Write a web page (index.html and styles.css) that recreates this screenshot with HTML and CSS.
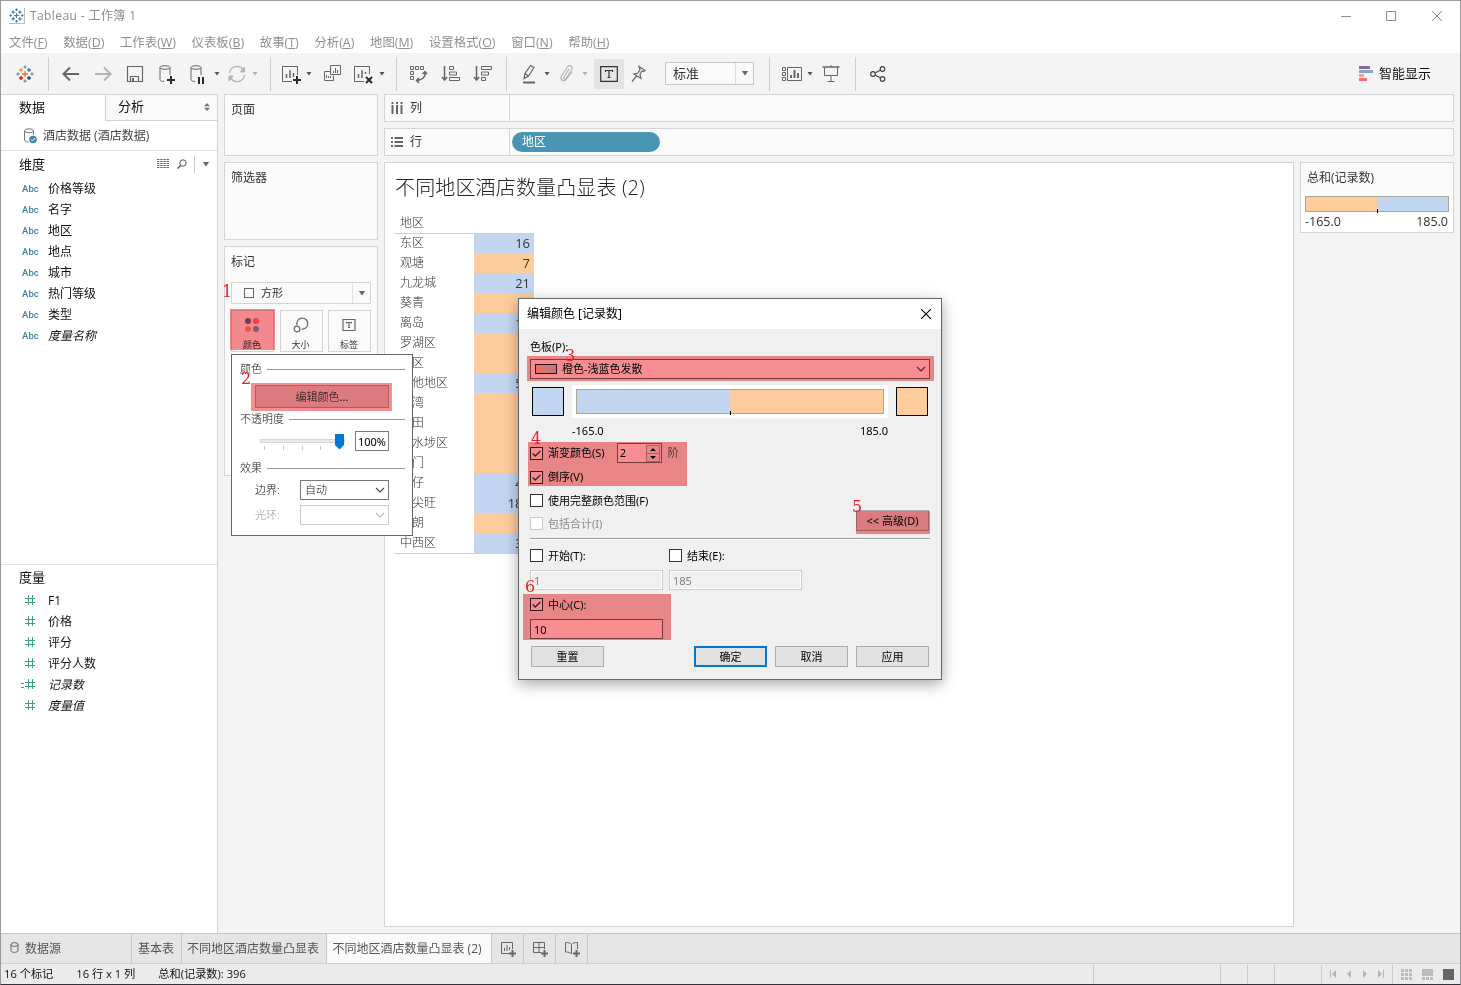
FILE: index.html
```
<!DOCTYPE html>
<html lang="zh-CN">
<head>
    <meta charset="UTF-8">
    <title>Tableau - 工作簿 1</title>
    <link rel="stylesheet" href="styles.css">
</head>
<body>
    <svg width="0" height="0" class="defs">
        <symbol id="logo" viewBox="0 0 18 18">
            <g fill="none" stroke-width="1.3">
                <path class="c1" d="M9 6v6M6 9h6"/>
                <path class="c2" d="M5 3v4M3 5h4"/>
                <path class="c3" d="M13 3v4M11 5h4"/>
                <path class="c4" d="M5 11v4M3 13h4"/>
                <path class="c5" d="M13 11v4M11 13h4"/>
                <path class="c6" d="M9 .5v3M7.500 2h3M9 14.500v3M7.500 16h3M2 7.500v3M.5 9h3M16 7.500v3M14.500 9h3"/>
            </g>
        </symbol>
        <symbol id="caret" viewBox="0 0 6 4"><path d="M.5 0h5L3 3.500z" fill="currentColor"/></symbol>
        <symbol id="chev" viewBox="0 0 10 6"><path d="M1 1l4 4 4-4" fill="none" stroke="currentColor" stroke-width="1.100"/></symbol>
        <symbol id="tick" viewBox="0 0 13 13"><path d="M2 6.500l3 3L11 3.500" fill="none" stroke="currentColor" stroke-width="1.400"/></symbol>
        <symbol id="hash" viewBox="0 0 10 10"><path d="M3.500 0v10M7.500 0v10M0 3.500h10M0 7.500h10" fill="none" stroke="currentColor"/></symbol>
    </svg>

    <div class="window">
        <div class="titlebar">
            <svg class="app-icon" viewBox="0 0 18 18"><path d="M9 6v6M6 9h6M5 3v4M3 5h4M13 3v4M11 5h4M5 11v4M3 13h4M13 11v4M11 13h4M9 .5v3M7.500 2h3M9 14.500v3M7.500 16h3M2 7.500v3M.5 9h3M16 7.500v3M14.500 9h3" fill="none" stroke="#3d7ca8" stroke-width="1.400"/></svg>
            <span class="title">Tableau - 工作簿 1</span>
            <svg class="win-btns" viewBox="0 0 102 12" fill="none" stroke="#8d8d8d">
                <path d="M0 6.500h10M45.500 1.500h9v9h-9zM91 1l10 10M101 1L91 11"/>
            </svg>
        </div>
        <div class="menubar">
            <span>文件(<u>F</u>)</span><span>数据(<u>D</u>)</span><span>工作表(<u>W</u>)</span><span>仪表板(<u>B</u>)</span><span>故事(<u>T</u>)</span><span>分析(<u>A</u>)</span><span>地图(<u>M</u>)</span><span>设置格式(<u>O</u>)</span><span>窗口(<u>N</u>)</span><span>帮助(<u>H</u>)</span>
        </div>

        <div class="toolbar">
            <div class="group g1"><svg class="logo"><use href="#logo"/></svg></div>
            <div class="group g2">
                <svg class="icon" viewBox="0 0 20 20"><path stroke-width="2" d="M18 10H3M9 3.500L2.500 10 9 16.500"/></svg>
                <svg class="icon off" viewBox="0 0 20 20"><path stroke-width="2" d="M2 10h15M11 3.500l6.500 6.500-6.500 6.500"/></svg>
                <svg class="icon" viewBox="0 0 20 20"><path stroke-width="1.200" d="M2.500 2.500h15v15h-15zM5.500 17v-4.500h8v4.500"/><path stroke-width="2" d="M8 14v3"/></svg>
                <svg class="icon" viewBox="0 0 20 20"><ellipse cx="8" cy="3.500" rx="5" ry="1.800"/><path d="M3 3.500v12c0 1.300 2 2 4 2M13 3.500V11"/><path class="dark" d="M14 12v8M10 16h8"/></svg>
                <svg class="icon" viewBox="0 0 20 20"><ellipse cx="7" cy="3.500" rx="5" ry="1.800"/><path d="M2 3.500v12c0 1.300 2 2 4 2M12 3.500V11"/><path class="dark" d="M10 13v7M14 13v7"/></svg>
                <svg class="caret"><use href="#caret"/></svg>
                <svg class="icon off" viewBox="0 0 20 20"><path stroke-width="1.300" d="M2.500 9A7.500 7.500 0 0 1 16 5.500M17.500 11a7.500 7.500 0 0 1-13.500 3.500"/><path fill="#b4b4b4" d="M17.500 3v5h-4zM2 17v-5h4z"/></svg>
                <svg class="caret off"><use href="#caret"/></svg>
            </div>
            <div class="group g3">
                <svg class="icon" viewBox="0 0 20 20"><path d="M16.500 11V2.500h-15v15H11"/><path stroke-width="1.500" d="M5.500 14v-4M9 14V6M12.500 13V9"/><path class="dark" d="M16 12v8M12 16h8"/></svg>
                <svg class="caret"><use href="#caret"/></svg>
                <svg class="icon dup" viewBox="0 0 20 20"><path d="M8.500 1.500h10v9h-10zM8 7.500H2.500v9h9v-5"/><path d="M11.500 9V7M13.500 9V4M15.500 9V6M4.500 14v-3M6.500 14v-2M8.500 14v-2"/></svg>
                <svg class="icon clear" viewBox="0 0 20 20"><path d="M16.500 10V2.500h-15v15H11"/><path stroke-width="1.500" d="M5.500 14v-4M9 14V6M12.500 10V8"/><path class="dark" d="M13 13l6 6M19 13l-6 6"/></svg>
                <svg class="caret"><use href="#caret"/></svg>
            </div>
            <div class="group g4">
                <svg class="icon" viewBox="0 0 20 20"><path d="M1.500 2.500h3v3h-3zM6.500 2.500h3v3h-3zM11.500 2.500h3v3h-3zM1.500 7.500h3v3h-3zM1.500 12.500h3v3h-3z"/><path stroke-width="1.500" d="M16 8c1 5-3 8-8 8.500M13.500 10l2.500-2.500 2 2.500M10 14l-2.500 2.500L10 19"/></svg>
                <svg class="icon" viewBox="0 0 20 20"><path stroke-width="1.500" d="M3.500 2v13M1 13l2.500 3L6 13"/><path d="M8.500 2.500h4v3h-4zM8.500 8h7v3h-7zM8.500 13.500h10v3h-10z"/></svg>
                <svg class="icon" viewBox="0 0 20 20"><path stroke-width="1.500" d="M3.500 2v13M1 13l2.500 3L6 13"/><path d="M8.500 2.500h10v3h-10zM8.500 8h7v3h-7zM8.500 13.500h4v3h-4z"/></svg>
            </div>
            <div class="group g5">
                <svg class="icon" viewBox="0 0 20 20"><path stroke-width="1.200" d="M5 14.500l1-5 5.500-8 3.500 2-5.500 8.500zM6 9.500l3.500 2.500"/><path stroke-width="2" d="M4 18.500h12"/></svg>
                <svg class="caret"><use href="#caret"/></svg>
                <svg class="icon off" viewBox="0 0 20 20"><path stroke-width="1.200" d="M12 5l-5 8c-1 2 1 3 2 1.500l5.500-8.500c2-3.500-2-6-4-3L5 11c-3 5 2 7.500 4.500 4L15 8"/></svg>
                <svg class="caret off"><use href="#caret"/></svg>
                <span class="label-btn"><svg viewBox="0 0 18 16"><path d="M.7.7h16.600v14.600H.7zM5.500 6V4.500h7V6M9 4.500v7M7.500 11.500h3"/></svg></span>
                <svg class="icon pin" viewBox="0 0 20 20"><path stroke-width="1.200" d="M11 2.500l6 4-1.500 1-1.500-.5-2 3.500 1 4-7-4.500 4-1 2-3.500zM8.500 12L4 17.500"/></svg>
                <div class="combo"><span>标准</span><i><svg class="caret big"><use href="#caret"/></svg></i></div>
            </div>
            <div class="group g6">
                <svg class="icon" viewBox="0 0 20 20"><path d="M.5 3.500h3v3h-3zM.5 8.500h3v3h-3zM.5 13.500h3v3h-3zM5.500 3.500h14v13h-14z"/><path stroke-width="2" d="M9 14v-3M12.500 14V6M16 14V9"/></svg>
                <svg class="caret"><use href="#caret"/></svg>
                <svg class="icon screen" viewBox="0 0 20 20"><path stroke-width="1.500" d="M1.500 3h17"/><path d="M3.500 3v8.500h13V3M10 1v2M10 11.500v6M6.500 17.500h7"/></svg>
            </div>
            <div class="group g7">
                <svg class="icon share" viewBox="0 0 20 20"><circle cx="5" cy="10" r="2.300"/><circle cx="14.500" cy="5" r="2.300"/><circle cx="14.500" cy="15" r="2.300"/><path d="M7.300 8.800l5-2.600M7.300 11.200l5 2.600"/></svg>
            </div>
            <div class="showme">
                <svg viewBox="0 0 14 15"><path fill="#866b94" d="M0 0h11v3H0z"/><path fill="#82a6cc" d="M0 4h14v3H0z"/><path fill="#f0a581" d="M0 8h5v3H0z"/><path fill="#f96a7c" d="M0 12h8v3H0z"/></svg>
                智能显示
            </div>
        </div>

        <div class="main">
            <div class="sidebar">
                <div class="side-tabs">
                    <span class="active">数据</span>
                    <span class="inactive">分析<svg viewBox="0 0 6 8"><path d="M3 0l3 3.300H0zM3 8l3-3.300H0z" fill="#6d7780"/></svg></span>
                </div>
                <div class="source">
                    <svg viewBox="0 0 14 16"><g fill="none" stroke="#777"><ellipse cx="6" cy="2.800" rx="4.500" ry="2"/><path d="M1.500 3v9c0 1 1.500 2 4 2M10.500 3v4"/></g><circle cx="10" cy="11.500" r="3.800" fill="#3f86a5"/><path d="M8 11.500l1.500 1.500 2.500-3" fill="none" stroke="#fff"/></svg>
                    酒店数据 (酒店数据)
                </div>
                <div class="dims">
                    <div class="side-head">
                        <span>维度</span>
                        <svg class="grid-icon" viewBox="0 0 12 10"><path d="M0 .5h12M0 2.500h12M0 4.500h12M0 6.500h12M0 8.500h12" stroke="#666" stroke-dasharray="2.400 .8"/></svg>
                        <svg class="find" viewBox="0 0 10 10"><circle cx="6" cy="4" r="3.200" fill="none" stroke="#555"/><path d="M3.500 6.500L.5 9.500" stroke="#555" stroke-width="1.500"/></svg>
                        <i><svg class="caret big"><use href="#caret"/></svg></i>
                    </div>
                    <ul class="fields abc">
                        <li><b>Abc</b>价格等级</li>
                        <li><b>Abc</b>名字</li>
                        <li><b>Abc</b>地区</li>
                        <li><b>Abc</b>地点</li>
                        <li><b>Abc</b>城市</li>
                        <li><b>Abc</b>热门等级</li>
                        <li><b>Abc</b>类型</li>
                        <li><b>Abc</b><em>度量名称</em></li>
                    </ul>
                </div>
                <div class="measures">
                    <div class="side-head"><span>度量</span></div>
                    <ul class="fields">
                        <li><b><svg><use href="#hash"/></svg></b>F1</li>
                        <li><b><svg><use href="#hash"/></svg></b>价格</li>
                        <li><b><svg><use href="#hash"/></svg></b>评分</li>
                        <li><b><svg><use href="#hash"/></svg></b>评分人数</li>
                        <li><b class="calc"><svg><use href="#hash"/></svg></b><em>记录数</em></li>
                        <li><b><svg><use href="#hash"/></svg></b><em>度量值</em></li>
                    </ul>
                </div>
            </div>

            <div class="cards">
                <div class="card pages">页面</div>
                <div class="card filters">筛选器</div>
                <div class="card marks">
                    标记
                    <div class="mark-type"><em></em><span>方形</span><i><svg class="caret big"><use href="#caret"/></svg></i></div>
                    <div class="mark-btns">
                        <div><svg viewBox="0 0 16 16"><circle cx="4" cy="4" r="3" fill="#7b6c95"/><circle cx="12" cy="4" r="3" fill="#f96a7c"/><circle cx="4" cy="12" r="3" fill="#f0a581"/><circle cx="12" cy="12" r="3" fill="#82a6cc"/></svg>颜色</div>
                        <div><svg viewBox="0 0 16 16" fill="none" stroke="#666" stroke-width="1.200"><path d="M4 8a5.500 5.500 0 1 1 4.500 4"/><circle cx="4" cy="12" r="2.800"/></svg>大小</div>
                        <div><svg viewBox="0 0 16 16" fill="none" stroke="#666" stroke-width="1.200"><path d="M2 2.500h12v11H2zM5.500 6.500V5.500h5v1M8 5.500v5M7 10.500h2"/></svg>标签</div>
                    </div>
                </div>
            </div>

            <div class="workspace">
                <div class="shelf">
                    <div class="shelf-name"><svg viewBox="0 0 12 12"><path d="M1.500 0v2M6 0v2M10.500 0v2M1.500 3v9M6 3v9M10.500 3v9" stroke="#666" stroke-width="2"/></svg>列</div>
                </div>
                <div class="shelf">
                    <div class="shelf-name"><svg viewBox="0 0 12 12"><path d="M0 2h2M0 6h2M0 10h2M3.500 2H12M3.500 6H12M3.500 10H12" stroke="#666" stroke-width="1.800"/></svg>行</div>
                    <div class="pill">地区</div>
                </div>
                <div class="lower">
                    <div class="view">
                        <h1>不同地区酒店数量凸显表 (2)</h1>
                        <table>
                            <tr><th>地区</th><th></th></tr>
                            <tr><td>东区</td><td class="blue">16</td></tr>
                            <tr><td>观塘</td><td class="orange">7</td></tr>
                            <tr><td>九龙城</td><td class="blue">21</td></tr>
                            <tr><td>葵青</td><td class="orange">3</td></tr>
                            <tr><td>离岛</td><td class="blue">11</td></tr>
                            <tr><td>罗湖区</td><td class="orange">1</td></tr>
                            <tr><td>南区</td><td class="orange">4</td></tr>
                            <tr><td>其他地区</td><td class="blue">55</td></tr>
                            <tr><td>荃湾</td><td class="orange">4</td></tr>
                            <tr><td>沙田</td><td class="orange">5</td></tr>
                            <tr><td>深水埗区</td><td class="orange">3</td></tr>
                            <tr><td>屯门</td><td class="orange">2</td></tr>
                            <tr><td>湾仔</td><td class="blue">41</td></tr>
                            <tr><td>油尖旺</td><td class="blue">185</td></tr>
                            <tr><td>元朗</td><td class="orange">3</td></tr>
                            <tr><td>中西区</td><td class="blue">35</td></tr>
                        </table>
                    </div>
                    <div class="legend">
                        <div class="legend-title">总和(记录数)</div>
                        <div class="legend-bar"></div>
                        <div class="legend-range"><span>-165.0</span><span>185.0</span></div>
                    </div>
                </div>
            </div>
        </div>

        <div class="sheet-tabs">
            <span class="ds"><svg viewBox="0 0 8 11" fill="none" stroke="#666"><ellipse cx="4" cy="2.500" rx="3.500" ry="1.900"/><path d="M.5 2.500v6c0 2.500 7 2.500 7 0v-6"/></svg>数据源</span>
            <span class="t1">基本表</span>
            <span class="t2">不同地区酒店数量凸显表</span>
            <span class="t3 active">不同地区酒店数量凸显表 (2)</span>
            <span class="add"><svg viewBox="0 0 16 16"><path d="M12.500 8V1.500h-11v11H9M4.500 10V7M7 10V4M9.500 9V6"/><path stroke-width="2" d="M12.500 9v7M9 12.500h7"/></svg></span>
            <span class="add"><svg viewBox="0 0 16 16"><path d="M12.500 8V1.500h-11v10H9M7 1.500v10M1.500 6.500h11"/><path stroke-width="2" d="M12.500 9v7M9 12.500h7"/></svg></span>
            <span class="add"><svg viewBox="0 0 16 16"><path d="M13.500 8V1.500c-3 0-5 .5-6 2-1-1.500-3-2-6-2v9.500c3 0 5 .5 6 2V3.500"/><path stroke-width="2" d="M12.500 9v7M9 12.500h7"/></svg></span>
        </div>
        <div class="status">
            <span>16 个标记</span><span>16 行 x 1 列</span><span>总和(记录数): 396</span>
            <div class="boxes">
                <i class="b1"></i><i class="b2"></i><i class="b2"></i><i class="b3"></i>
                <i class="nav"><svg viewBox="0 0 56 8" fill="#b4b4b4"><path d="M0 0h1v8H0zM6 0v8L2 4zM21 0v8l-4-4zM33 0v8l4-4zM48 0v8l4-4zM53 0h1v8h-1z"/></svg></i>
                <i class="modes"><svg viewBox="0 0 53 11"><g fill="#bbb"><path d="M0 0h3v3H0zM4 0h3v3H4zM8 0h3v3H8zM0 4h3v3H0zM4 4h3v3H4zM8 4h3v3H8zM0 8h3v3H0zM4 8h3v3H4zM8 8h3v3H8zM21 0h11v7H21zM21 8h3v3h-3zM25 8h3v3h-3zM29 8h3v3h-3z"/></g><path fill="#666" d="M42 0h11v11H42z"/></svg></i>
            </div>
        </div>
    </div>

    <div class="popup">
        <div class="sec">颜色</div>
        <div class="edit-btn">编辑颜色<b>...</b></div>
        <div class="sec">不透明度</div>
        <div class="opacity">
            <svg viewBox="0 0 86 18"><path d="M.5 7.500h84v3H.5z" fill="#e7eaea" stroke="#d6d6d6"/><path d="M4.500 14v4M23.500 14v4M42.500 14v4M60.500 14v4" stroke="#c4c4c4"/><path d="M75 2h9v11l-4.500 4.500L75 13z" fill="#0078d7"/></svg>
            <div class="pct">100%</div>
        </div>
        <div class="sec">效果</div>
        <div class="fx"><label>边界:</label><div class="sel">自动<svg><use href="#chev"/></svg></div></div>
        <div class="fx off"><label>光环:</label><div class="sel"><svg><use href="#chev"/></svg></div></div>
    </div>

    <div class="dialog">
        <div class="dlg-title">编辑颜色 [记录数]<svg viewBox="0 0 10 10"><path d="M0 0l10 10M10 0L0 10" stroke="#000" stroke-width="1.100"/></svg></div>
        <div class="dlg-body">
            <div class="pal-label">色板(P):</div>
            <div class="pal-select"><em></em>橙色-浅蓝色发散<svg><use href="#chev"/></svg></div>
            <div class="ramp">
                <div class="swatch blue"></div>
                <div class="ramp-panel"><div class="ramp-bar"></div></div>
                <div class="swatch orange"></div>
            </div>
            <div class="ramp-range"><span>-165.0</span><span>185.0</span></div>
            <div class="check"><em><svg><use href="#tick"/></svg></em>渐变颜色(S)
                <div class="spin">2<svg viewBox="0 0 15 17"><path d="M.5.5h13v8H.5zM.5 8.500h13v8H.5z" fill="#f0f0f0" stroke="#adadad"/><path d="M7 3l3 3H4zM7 14l3-3H4z" fill="#000"/></svg></div><span class="soft">阶</span></div>
            <div class="check rev"><em><svg><use href="#tick"/></svg></em>倒序(V)</div>
            <div class="adv-row">
                <div>
                    <div class="check c23"><em></em>使用完整颜色范围(F)</div>
                    <div class="check c23 off"><em></em>包括合计(I)</div>
                </div>
                <div class="btn">&lt;&lt; 高级(D)</div>
            </div>
            <div class="rule"></div>
            <div class="limits">
                <div><div class="check"><em></em>开始(T):</div><div class="input off">1</div></div>
                <div><div class="check"><em></em>结束(E):</div><div class="input off">185</div></div>
                <div><div class="check"><em><svg><use href="#tick"/></svg></em>中心(C):</div><div class="input">10</div></div>
            </div>
            <div class="dlg-btns"><div class="btn reset">重置</div><div class="btn ok">确定</div><div class="btn">取消</div><div class="btn">应用</div></div>
        </div>
    </div>

    <!-- step highlights -->
    <div class="hl h1"></div><div class="hl h2"></div><div class="hl h3"></div>
    <div class="hl h4"></div><div class="hl h5"></div><div class="hl h6"></div>
    <div class="step n1">1</div><div class="step n2">2</div><div class="step n3">3</div>
    <div class="step n4">4</div><div class="step n5">5</div><div class="step n6">6</div>
</body>
</html>
```
FILE: styles.css
```
*{
    box-sizing: border-box;
}
body{
    margin: 0;
    position: relative;
    width: 1461px;
    height: 985px;
    overflow: hidden;
    font-family: "Open Sans", "Noto Sans CJK SC", sans-serif;
    font-size: 12px;
    line-height: 16px;
    color: #333;
    white-space: nowrap;
}
svg{
    flex: none;
    display: block;
}
i, em{
    font-style: normal;
}
.defs{
    position: absolute;
}
.window{
    width: 1461px;
    height: 985px;
    border: 1px solid #999;
    border-bottom-color: #33333a;
    display: flex;
    flex-direction: column;
    background: #f4f4f4;
}

/* title + menu */
.titlebar{
    height: 30px;
    background: #fff;
    display: flex;
    align-items: center;
    padding: 0 17px 0 8px;
    color: #8d8d8d;
}
.app-icon{
    width: 16px;
    height: 16px;
    border-right: 1px solid #bbb;
    border-bottom: 1px solid #bbb;
}
.title{
    margin-left: 5px;
    flex: 1;
    letter-spacing: 0.4px;
}
.win-btns{
    width: 102px;
    height: 12px;
}
.menubar{
    height: 22px;
    background: #fff;
    display: flex;
    align-items: center;
    gap: 15.7px;
    padding: 2px 0 0 8px;
    color: #8f8f8f;
    font-size: 12.4px;
}

/* toolbar */
.toolbar{
    height: 41px;
    display: flex;
    align-items: center;
}
.group{
    height: 34px;
    display: flex;
    align-items: center;
    border-right: 1px solid #cfcfcf;
}
.g1{ width: 48px; padding-left: 15px; }
.g2{ width: 222px; padding-left: 6px; }
.g3{ width: 126px; padding-left: 4px; }
.g4{ width: 110px; padding-left: 6px; }
.g5{ width: 263px; padding-left: 6px; }
.g6{ width: 86px; padding-left: 6px; }
.g7{ padding-left: 6px; border: none; }
.logo{
    width: 18px;
    height: 18px;
}
.c1{ stroke: #e8762d; }
.c2{ stroke: #e8a23b; }
.c3{ stroke: #4a7a99; }
.c4{ stroke: #c72035; }
.c5{ stroke: #1f457e; }
.c6{ stroke: #7099a6; }
.icon{
    width: 20px;
    height: 20px;
    margin: 0 6px;
    fill: none;
    stroke: #666;
}
.icon.off{
    stroke: #b4b4b4;
}
.icon .dark{
    stroke: #2b2b2b;
    stroke-width: 2;
}
.icon.dup{ margin-left: 9px; }
.icon.clear{ margin: 0 7px 0 5px; }
.icon.share{ stroke: #444; stroke-width: 1.2; }
.icon.screen{ margin-left: 7px; }
.icon.pin{ margin: 0 17px 0 4px; }
.caret{
    width: 6px;
    height: 4px;
    margin: 0 1px 0 -1px;
    color: #555;
}
.caret.off{
    color: #b4b4b4;
}
.caret.big{
    width: 8px;
    height: 5px;
    margin: 0;
    color: #666;
}
.label-btn{
    width: 30px;
    height: 30px;
    margin-left: 5px;
    background: #e4e4e4;
    display: flex;
    align-items: center;
    justify-content: center;
}
.label-btn svg{
    width: 18px;
    height: 16px;
    fill: none;
    stroke: #333;
    stroke-width: 1.2;
}
.combo{
    width: 89px;
    height: 23px;
    border: 1px solid #c8c8c8;
    display: flex;
    align-items: center;
    background: #f9f9f9;
    font-size: 13px;
}
.combo span{
    flex: 1;
    padding: 0 0 1px 7px;
}
.combo i{
    width: 18px;
    height: 21px;
    border-left: 1px solid #dcdcdc;
    display: flex;
    align-items: center;
    justify-content: center;
}
.showme{
    margin-left: auto;
    margin-right: 29px;
    display: flex;
    align-items: center;
    gap: 6px;
    font-size: 13px;
    line-height: 15px;
    padding-bottom: 1px;
    color: #111;
}
.showme svg{
    width: 14px;
    height: 15px;
}

/* main area */
.main{
    height: 839px;
    display: flex;
}
.sidebar{
    width: 217px;
    background: #fff;
    border-top: 1px solid #d4d4d4;
    border-right: 1px solid #d4d4d4;
    color: #111;
}
.side-tabs{
    display: flex;
    height: 26px;
    font-size: 13px;
    line-height: 25px;
}
.side-tabs .active{
    width: 104px;
    padding-left: 18px;
}
.side-tabs .inactive{
    flex: 1;
    display: flex;
    justify-content: space-between;
    align-items: center;
    padding: 0 7px 2px 12px;
    background: #f9f9f9;
    border-left: 1px solid #d4d4d4;
    border-bottom: 1px solid #d4d4d4;
}
.side-tabs svg{
    width: 6px;
    height: 8px;
}
.source{
    height: 30px;
    display: flex;
    align-items: center;
    gap: 6px;
    padding-left: 22px;
    border-bottom: 1px solid #e2e2e2;
    color: #444;
}
.source svg{
    width: 14px;
    height: 16px;
}
.dims{
    height: 413px;
}
.measures{
    border-top: 1px solid #e2e2e2;
}
.side-head{
    height: 27px;
    display: flex;
    align-items: center;
    padding: 0 7px 1px 18px;
    font-size: 13px;
}
.side-head span{
    flex: 1;
}
.measures .side-head{
    height: 25px;
    padding-bottom: 2px;
}
.grid-icon{
    width: 12px;
    height: 10px;
    margin-right: 8px;
}
.find{
    width: 10px;
    height: 10px;
    margin-right: 7px;
}
.side-head i{
    border-left: 1px solid #ccc;
    padding: 6px 0 6px 7px;
}
.fields{
    list-style: none;
    margin: 0;
    padding: 0;
}
.fields li{
    height: 21px;
    display: flex;
    align-items: center;
}
.fields b{
    width: 47px;
    padding-left: 21px;
    font: 500 9.5px/16px Roboto, sans-serif;
    letter-spacing: 0.1px;
    color: #3b82a0;
    position: relative;
}
.fields b svg{
    width: 10px;
    height: 10px;
    margin: -1px 0 0 3px;
    color: #3fa07a;
}
.fields .calc::before{
    content: "";
    position: absolute;
    left: 20px;
    top: 3px;
    width: 3px;
    height: 3px;
    border: solid #3fa07a;
    border-width: 1px 0;
}
.fields em{
    font-style: italic;
}

/* cards */
.cards{
    width: 154px;
    margin-left: 6px;
    display: flex;
    flex-direction: column;
    gap: 6px;
}
.card{
    border: 1px solid #d4d4d4;
    background: #fafafa;
    padding: 7px 6px 0;
}
.pages{ height: 62px; }
.filters{ height: 78px; }
.marks{ height: 230px; }
.mark-type{
    margin-top: 12px;
    width: 140px;
    height: 22px;
    border: 1px solid #d4d4d4;
    border-radius: 1px;
    display: flex;
    align-items: center;
    font-size: 11px;
}
.mark-type em{
    width: 10px;
    height: 10px;
    border: 1px solid #666;
    margin: 0 7px 0 12px;
}
.mark-type span{
    flex: 1;
}
.mark-type i{
    width: 18px;
    height: 20px;
    border-left: 1px solid #e2e2e2;
    display: flex;
    align-items: center;
    justify-content: center;
}
.mark-btns{
    margin-top: 6px;
    display: flex;
    justify-content: space-between;
    width: 140px;
}
.mark-btns div{
    width: 43px;
    height: 42px;
    border: 1px solid #d4d4d4;
    display: flex;
    flex-direction: column;
    align-items: center;
    font-size: 9px;
    line-height: 12px;
    padding: 6px 1px 0 0;
}
.mark-btns svg{
    width: 16px;
    height: 16px;
    margin-bottom: 6px;
}

/* shelves and sheet */
.workspace{
    width: 1070px;
    margin-left: 6px;
    display: flex;
    flex-direction: column;
    gap: 6px;
}
.shelf{
    height: 28px;
    border: 1px solid #d4d4d4;
    background: #fafafa;
    display: flex;
    align-items: center;
}
.shelf-name{
    width: 125px;
    height: 26px;
    border-right: 1px solid #d4d4d4;
    display: flex;
    align-items: center;
    gap: 7px;
    padding-left: 6px;
    line-height: 18px;
}
.shelf-name svg{
    width: 12px;
    height: 12px;
    margin-bottom: 1px;
}
.pill{
    width: 148px;
    height: 20px;
    margin-left: 2px;
    border-radius: 10px;
    background: #4996b2;
    color: #fff;
    padding-left: 10px;
    line-height: 19px;
}
.lower{
    display: flex;
    gap: 6px;
    align-items: flex-start;
}
.view{
    width: 910px;
    height: 765px;
    border: 1px solid #d4d4d4;
    background: #fff;
    padding: 11px 9px;
}
.view h1{
    margin: 0 0 0 1px;
    font-size: 20px;
    letter-spacing: 0.15px;
    line-height: 28px;
    font-weight: 300;
    height: 40px;
    color: #222;
}
.view table{
    border-collapse: collapse;
    width: 140px;
    table-layout: fixed;
    border-bottom: 1px solid #d0d0d0;
}
.view tr{
    height: 20px;
}
.view tr:first-child{
    height: 19px;
}
.view td, .view th{
    padding: 0 0 0 6px;
    text-align: left;
    font-weight: 300;
    line-height: 18px;
    color: #333;
}
.view th{
    height: 19px;
    border-bottom: 1px solid #d0d0d0;
}
.view th:first-child{
    width: 80px;
}
.view td:last-child{
    text-align: right;
    padding-right: 4px;
    font-size: 13px;
    font-weight: 400;
}
.blue{ background: #c3d6f1; }
.orange{ background: #ffcc9e; }
.legend{
    width: 154px;
    height: 71px;
    border: 1px solid #d4d4d4;
    background: #fff;
}
.legend-title{
    height: 29px;
    line-height: 29px;
    padding-left: 6px;
    background: #fafafa;
}
.legend-bar, .ramp-bar{
    border: 1px solid #aca899;
    position: relative;
}
.legend-bar{
    height: 16px;
    margin: 4px 4px 2px;
    background: linear-gradient(90deg, #ffcc9e 50%, #c3d6f1 50%);
}
.legend-bar::after, .ramp-bar::after{
    content: "";
    position: absolute;
    left: 50%;
    bottom: -2px;
    width: 1px;
    height: 4px;
    background: #000;
}
.legend-range, .ramp-range{
    display: flex;
    justify-content: space-between;
}
.legend-range{
    padding: 0 5px 0 4px;
    font-size: 12.5px;
}

/* bottom bars */
.sheet-tabs{
    height: 31px;
    background: #e5e5e5;
    border-top: 1px solid #c8c8c8;
    border-bottom: 1px solid #cfcfcf;
    display: flex;
    color: #555;
}
.sheet-tabs span{
    border-right: 1px solid #c8c8c8;
    display: flex;
    align-items: center;
    justify-content: center;
}
.sheet-tabs .ds{
    width: 131px;
    justify-content: flex-start;
    padding-left: 9px;
    gap: 6px;
}
.ds svg{
    width: 9px;
    height: 11px;
    margin-bottom: 2px;
}
.sheet-tabs .t1{ width: 50px; padding-right: 1px; }
.sheet-tabs .t2{ width: 145px; padding-right: 2px; }
.sheet-tabs .t3{ width: 165px; padding-right: 4px; }
.sheet-tabs .active{
    background: #fafafa;
}
.add{
    width: 32px;
}
.add svg{
    width: 16px;
    height: 16px;
    fill: none;
    stroke: #666;
}
.status{
    flex: 1;
    background: #ebebeb;
    display: flex;
    align-items: center;
    gap: 23px;
    padding-left: 3px;
    font-size: 11.2px;
    color: #111;
}
.boxes{
    margin-left: auto;
    display: flex;
    height: 19px;
}
.boxes i{
    border-left: 1px solid #cbcbcb;
    display: flex;
    align-items: center;
}
.b1{ width: 127px; }
.b2{ width: 27px; }
.b3{ width: 47px; }
.nav{ width: 71px; padding-left: 8px; }
.nav svg{ width: 56px; height: 8px; }
.modes{ width: 68px; padding-left: 8px; }
.modes svg{ width: 53px; height: 11px; }

/* colour popup */
.popup{
    position: absolute;
    left: 231px;
    top: 354px;
    width: 182px;
    height: 182px;
    border: 1px solid #666;
    background: #fff;
    padding: 6px 7px 0 8px;
    font-size: 11px;
    font-family: "Noto Sans", "Noto Sans CJK SC", sans-serif;
    font-weight: 300;
    color: #111;
}
.sec{
    display: flex;
    align-items: center;
    gap: 5px;
    height: 16px;
}
.sec::after{
    content: "";
    flex: 1;
    height: 1px;
    background: #999;
}
.edit-btn{
    width: 134px;
    height: 23px;
    margin: 8px 0 3px 15px;
    border: 1px solid #adadad;
    background: #e1e1e1;
    text-align: center;
    line-height: 21px;
}
.opacity{
    display: flex;
    gap: 9px;
    align-items: center;
    padding-left: 20px;
    height: 20px;
    margin: 4px 0 9px;
}
.opacity svg{
    width: 86px;
    height: 18px;
}
.pct{
    width: 34px;
    height: 20px;
    border: 1px solid #7a7a7a;
    text-align: center;
    line-height: 19px;
    font-weight: 400;
    color: #000;
}
.fx{
    height: 20px;
    margin-top: 4px;
    display: flex;
    align-items: center;
    padding-left: 15px;
}
.fx label{
    width: 45px;
}
.fx.off{
    color: #999;
    margin-top: 5px;
}
.sel{
    width: 89px;
    height: 20px;
    border: 1px solid #777;
    padding: 0 3px 0 4px;
    line-height: 18px;
    display: flex;
    align-items: center;
}
.off .sel{
    border-color: #ccc;
}
.sel svg, .pal-select svg{
    width: 10px;
    height: 6px;
    margin-left: auto;
    color: #444;
}
.off .sel svg{
    color: #bbb;
}

/* dialog */
.dialog{
    position: absolute;
    left: 518px;
    top: 298px;
    width: 424px;
    height: 382px;
    border: 1px solid #666;
    background: #f0f0f0;
    box-shadow: 0 4px 14px rgba(0,0,0,.35);
    font-family: "Noto Sans", "Noto Sans CJK SC", sans-serif;
    font-size: 11px;
    color: #000;
}
.dlg-title{
    height: 30px;
    background: #fff;
    display: flex;
    align-items: center;
    justify-content: space-between;
    padding: 0 10px 1px 8px;
    font-size: 12px;
}
.dlg-title svg{
    width: 10px;
    height: 10px;
}
.dlg-body{
    padding: 9px 11px 0;
}
.pal-label{
    height: 18px;
    line-height: 18px;
    margin-bottom: 3px;
}
.pal-select{
    height: 20px;
    border: 1px solid #7a6a6a;
    background: #fff;
    display: flex;
    align-items: center;
    padding: 0 3px 0 4px;
}
.pal-select em{
    width: 22px;
    height: 10px;
    border: 1px solid #222;
    margin-right: 5px;
    background: linear-gradient(90deg, #ffc09e, #dcd6d0, #c3d6f1);
}
.ramp{
    margin-top: 6px;
    height: 33px;
    display: flex;
    align-items: center;
    gap: 8px;
    padding-left: 2px;
}
.swatch{
    width: 32px;
    height: 29px;
    border: 1px solid #000;
}
.ramp-panel{
    width: 316px;
    height: 33px;
    padding: 4px;
    background: #fff;
}
.ramp-bar{
    height: 25px;
    background: linear-gradient(90deg, #c3d6f1 50%, #ffcc9e 50%);
}
.ramp-range{
    margin: 5px 42px 2px 42px;
}
.check{
    height: 24px;
    display: flex;
    align-items: center;
}
.check.c23{
    height: 23px;
}
.check em{
    width: 13px;
    height: 13px;
    border: 1px solid #333;
    background: #fff;
    margin-right: 5px;
}
.check em svg{
    width: 11px;
    height: 11px;
    color: #333;
}
.check.off{
    color: #8a8a8a;
}
.check.off em{
    border-color: #ccc;
}
.spin{
    width: 45px;
    height: 20px;
    margin: 0 6px 0 12px;
    border: 1px solid #7a6a6a;
    background: #fff;
    display: flex;
    align-items: center;
    justify-content: space-between;
    padding-left: 2px;
}
.spin svg{
    width: 15px;
    height: 17px;
}
.soft{
    font-weight: 300;
}
.adv-row{
    display: flex;
    justify-content: space-between;
    align-items: flex-end;
}
.btn{
    width: 73px;
    height: 21px;
    border: 1px solid #adadad;
    background: #e1e1e1;
    text-align: center;
    line-height: 19px;
}
.adv-row .btn{
    margin: 0 1px 4px 0;
}
.rule{
    margin: 3px 0 4px;
    height: 2px;
    background: #fff;
    border-top: 1px solid #a0a0a0;
}
.limits{
    display: grid;
    grid-template-columns: 133px 133px;
    gap: 3px 6px;
}
.limits .check{
    height: 23px;
    margin-bottom: 3px;
}
.input{
    height: 20px;
    border: 1px solid #7a6a6a;
    background: #fff;
    padding-left: 3px;
    line-height: 20px;
}
.input.off{
    border-color: #ccc;
    background: #f0f0f0;
    box-shadow: inset 0 0 0 1px #fff;
    color: #838383;
}
.dlg-btns{
    margin-top: 7px;
    display: flex;
    gap: 8px;
    padding-left: 1px;
}
.dlg-btns .reset{
    margin-right: 82px;
}
.dlg-btns .ok{
    border: 2px solid #0078d7;
    line-height: 17px;
}

/* highlights and step numbers lie over everything */
.hl{
    position: absolute;
    background: #f78d90;
    mix-blend-mode: multiply;
}
.h1{ left: 230px; top: 309px; width: 45px; height: 41px; }
.h2{ left: 251px; top: 383px; width: 141px; height: 28px; }
.h3{ left: 527px; top: 356px; width: 407px; height: 25px; }
.h4{ left: 528px; top: 442px; width: 159px; height: 44px; }
.h5{ left: 856px; top: 511px; width: 74px; height: 23px; }
.h6{ left: 523px; top: 594px; width: 148px; height: 46px; }
.step{
    position: absolute;
    font: 16px/16px "DejaVu Serif", serif;
    color: #ed1c24;
}
.n1{ left: 222px; top: 284px; }
.n2{ left: 241px; top: 371px; }
.n3{ left: 565px; top: 348px; }
.n4{ left: 531px; top: 431px; }
.n5{ left: 852px; top: 499px; }
.n6{ left: 525px; top: 579px; }
```
